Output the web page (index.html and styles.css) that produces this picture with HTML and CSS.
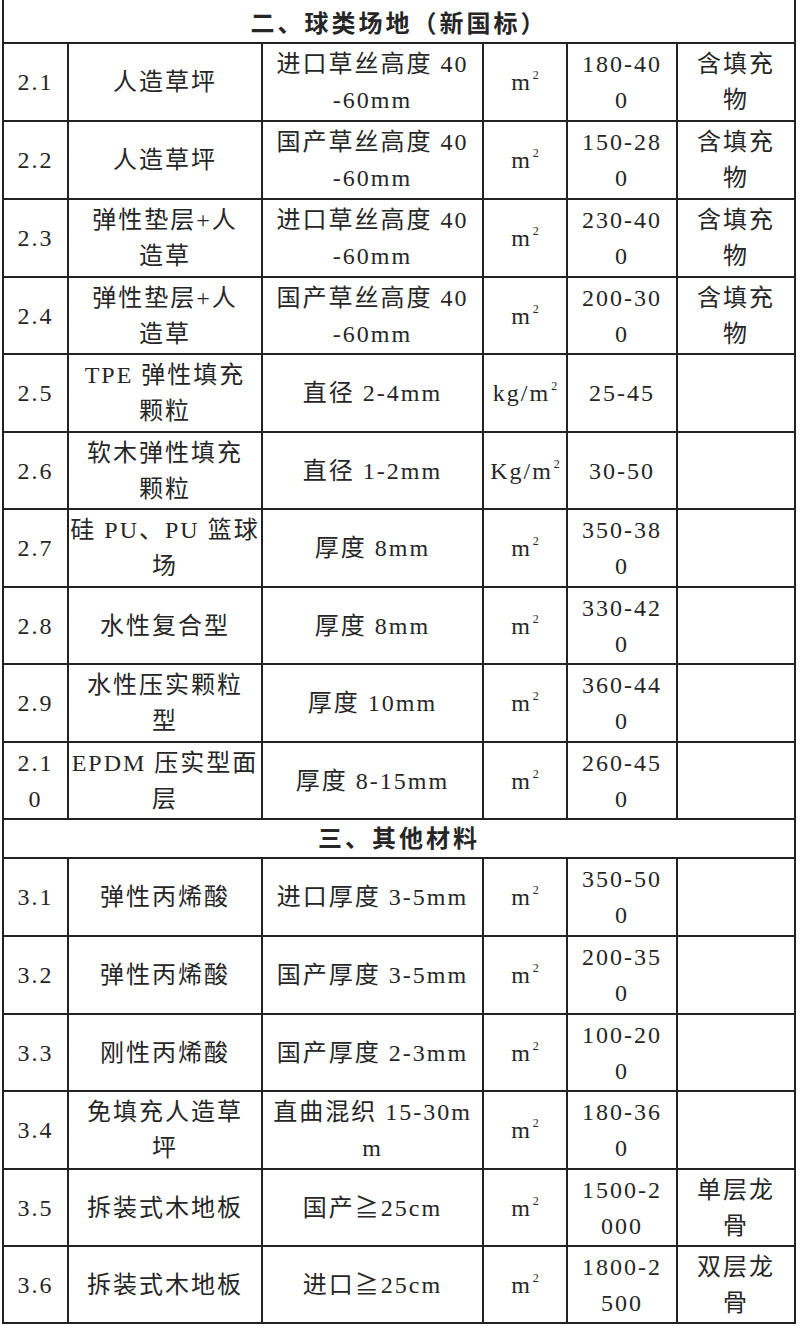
FILE: index.html
```html
<!DOCTYPE html>
<html>
<head>
<meta charset="utf-8">
<title>球类场地</title>
<link rel="stylesheet" href="styles.css">
</head>
<body>
<table class="price">
  <colgroup>
    <col class="c-no"><col class="c-name"><col class="c-spec"><col class="c-unit"><col class="c-price"><col class="c-note">
  </colgroup>
  <tbody>
    <tr class="sec first"><td colspan="6">二、球类场地（新国标）</td></tr>
    <tr class="h78"><td>2.1</td><td>人造草坪</td><td>进口草丝高度 40<br>-60mm</td><td>m<sup>2</sup></td><td>180-40<br>0</td><td>含填充<br>物</td></tr>
    <tr class="h78"><td>2.2</td><td>人造草坪</td><td>国产草丝高度 40<br>-60mm</td><td>m<sup>2</sup></td><td>150-28<br>0</td><td>含填充<br>物</td></tr>
    <tr class="h78"><td>2.3</td><td>弹性垫层+人<br>造草</td><td>进口草丝高度 40<br>-60mm</td><td>m<sup>2</sup></td><td>230-40<br>0</td><td>含填充<br>物</td></tr>
    <tr class="h77"><td>2.4</td><td>弹性垫层+人<br>造草</td><td>国产草丝高度 40<br>-60mm</td><td>m<sup>2</sup></td><td>200-30<br>0</td><td>含填充<br>物</td></tr>
    <tr class="h78"><td>2.5</td><td>TPE 弹性填充<br>颗粒</td><td>直径 2-4mm</td><td>kg/m<sup>2</sup></td><td>25-45</td><td></td></tr>
    <tr class="h77"><td>2.6</td><td>软木弹性填充<br>颗粒</td><td>直径 1-2mm</td><td>Kg/m<sup>2</sup></td><td>30-50</td><td></td></tr>
    <tr class="h78"><td>2.7</td><td>硅 PU、PU 篮球<br>场</td><td>厚度 8mm</td><td>m<sup>2</sup></td><td>350-38<br>0</td><td></td></tr>
    <tr class="h77"><td>2.8</td><td>水性复合型</td><td>厚度 8mm</td><td>m<sup>2</sup></td><td>330-42<br>0</td><td></td></tr>
    <tr class="h78"><td>2.9</td><td>水性压实颗粒<br>型</td><td>厚度 10mm</td><td>m<sup>2</sup></td><td>360-44<br>0</td><td></td></tr>
    <tr class="h77"><td>2.1<br>0</td><td>EPDM 压实型面<br>层</td><td>厚度 8-15mm</td><td>m<sup>2</sup></td><td>260-45<br>0</td><td></td></tr>
    <tr class="sec"><td colspan="6">三、其他材料</td></tr>
    <tr class="h78"><td>3.1</td><td>弹性丙烯酸</td><td>进口厚度 3-5mm</td><td>m<sup>2</sup></td><td>350-50<br>0</td><td></td></tr>
    <tr class="h78"><td>3.2</td><td>弹性丙烯酸</td><td>国产厚度 3-5mm</td><td>m<sup>2</sup></td><td>200-35<br>0</td><td></td></tr>
    <tr class="h77"><td>3.3</td><td>刚性丙烯酸</td><td>国产厚度 2-3mm</td><td>m<sup>2</sup></td><td>100-20<br>0</td><td></td></tr>
    <tr class="h78"><td>3.4</td><td>免填充人造草<br>坪</td><td>直曲混织 15-30m<br>m</td><td>m<sup>2</sup></td><td>180-36<br>0</td><td></td></tr>
    <tr class="h77"><td>3.5</td><td>拆装式木地板</td><td>国产≧25cm</td><td>m<sup>2</sup></td><td>1500-2<br>000</td><td>单层龙<br>骨</td></tr>
    <tr class="h77"><td>3.6</td><td>拆装式木地板</td><td>进口≧25cm</td><td>m<sup>2</sup></td><td>1800-2<br>500</td><td>双层龙<br>骨</td></tr>
  </tbody>
</table>
</body>
</html>
```

FILE: styles.css
```css
html, body {
  margin: 0;
  padding: 0;
  background: #ffffff;
}

body {
  font-family: "Liberation Serif", "Times New Roman", "DejaVu Serif", "Noto Sans CJK SC", serif;
  font-size: 24px;
  font-weight: 400;
  color: #262626;
}

.price {
  border-collapse: collapse;
  table-layout: fixed;
  width: 794px;
  margin: -1px 0 0 2px;
}

.c-no { width: 65px; }
.c-name { width: 194px; }
.c-spec { width: 221px; }
.c-unit { width: 84px; }
.c-price { width: 110px; }
.c-note { width: 118px; }

.price td {
  border: 2px solid #222222;
  padding: 0;
  text-align: center;
  vertical-align: middle;
  line-height: 36px;
  letter-spacing: 2px;
  white-space: nowrap;
  overflow: hidden;
}

.price tr.h78 { height: 78px; }
.price tr.h77 { height: 77px; }
.price tr.sec { height: 39px; }
.price tr.sec.first { height: 43px; }

.price tr.sec td {
  font-weight: 700;
  letter-spacing: 3px;
  line-height: 30px;
}

.price tr.first td {
  border-top-color: transparent;
  padding-top: 4px;
}

.price sup {
  font-size: 12px;
  line-height: 0;
  vertical-align: 0;
  position: relative;
  top: -11px;
  margin-left: 1px;
  letter-spacing: 0;
}
```
